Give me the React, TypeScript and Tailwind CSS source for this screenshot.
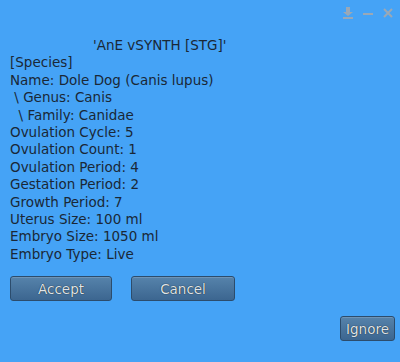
import React from "react";

const lines = [
  "[Species]",
  "Name: Dole Dog (Canis lupus)",
  " \\ Genus: Canis",
  "  \\ Family: Canidae",
  "Ovulation Cycle: 5",
  "Ovulation Count: 1",
  "Ovulation Period: 4",
  "Gestation Period: 2",
  "Growth Period: 7",
  "Uterus Size: 100 ml",
  "Embryo Size: 1050 ml",
  "Embryo Type: Live",
];

function Btn({ label, w }: { label: string; w: string }) {
  return (
    <div
      className={`${w} h-[25px] flex items-center justify-center rounded-[3px] border border-[#2c4c6c] bg-gradient-to-b from-[#5683ab] to-[#3c6690] text-[13.5px] text-[#dfe4e9] [text-shadow:0_0_1px_#000] shadow-[inset_0_1px_0_rgba(255,255,255,0.15)]`}
    >
      {label}
    </div>
  );
}

export default function App() {
  return (
    <div
      className="w-[400px] h-[362px] bg-[#45a3f6] text-[#1a2836] relative flex flex-col"
      style={{ fontFamily: '"DejaVu Sans", sans-serif' }}
    >
      <div className="h-[26px] flex items-center justify-end gap-[8px] pr-[6px]">
        <svg width="12" height="14" viewBox="0 0 12 14">
          <path d="M4 1h4v5h3L6 10 1 6h3z" fill="#9aa8b6" />
          <rect x="1" y="11" width="10" height="2" fill="#9aa8b6" />
        </svg>
        <svg width="12" height="12" viewBox="0 0 12 12">
          <rect x="1" y="6" width="10" height="2" fill="#9aa8b6" />
        </svg>
        <svg width="12" height="12" viewBox="0 0 12 12">
          <path d="M2 2l8 8M10 2l-8 8" stroke="#9aa8b6" strokeWidth="2" />
        </svg>
      </div>
      <div className="pl-[10px] pt-[11px] text-[13.5px] leading-[17.4px] whitespace-pre">
        <div className="pl-[83px]">'AnE vSYNTH [STG]'</div>
        {lines.map((l) => (
          <div key={l}>{l}</div>
        ))}
      </div>
      <div className="flex gap-[19px] pl-[10px] mt-[13px]">
        <Btn label="Accept" w="w-[102px]" />
        <Btn label="Cancel" w="w-[104px]" />
      </div>
      <div className="flex justify-end pr-[5px] mt-[15px]">
        <Btn label="Ignore" w="w-[55px]" />
      </div>
    </div>
  );
}
